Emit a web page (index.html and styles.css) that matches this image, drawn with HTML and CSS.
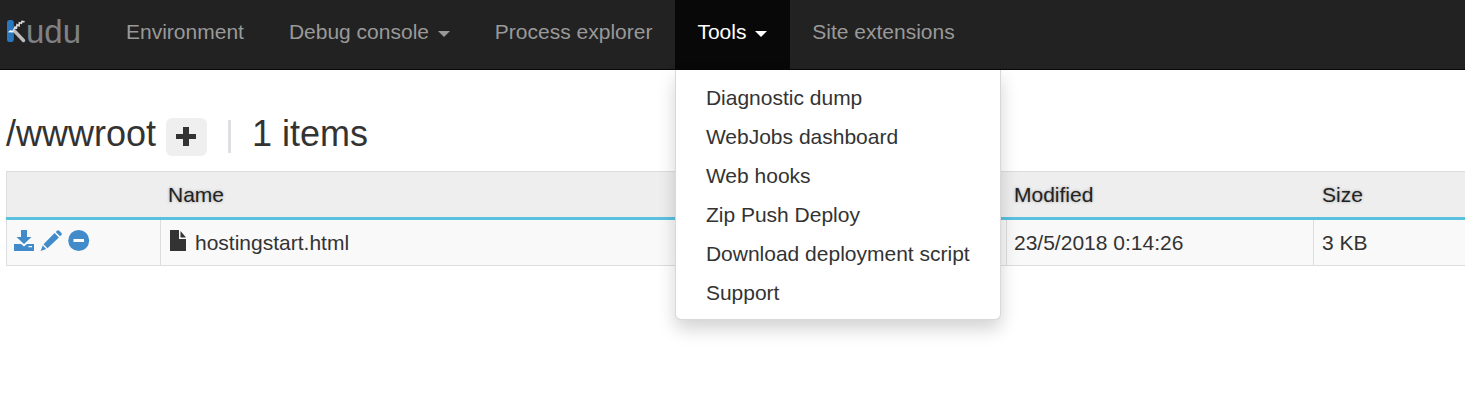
FILE: index.html
```html
<!DOCTYPE html>
<html lang="en">
<head>
<meta charset="utf-8">
<title>Kudu</title>
<link rel="stylesheet" href="styles.css">
</head>
<body>
<nav class="navbar">
  <a class="brand">
    <svg class="brand-mark" width="20" height="24" viewBox="0 0 20 24">
      <rect x="1" y="1" width="6.800" height="22" rx="2.800" fill="#2878c0"/>
      <path d="M8.500 12L17.500 21.500" stroke="#bdbdbd" stroke-width="3.400" stroke-linecap="round"/>
      <path d="M1.800 13.200l2.400-2 3.200.6v1.800z" fill="#fff"/>
      <path d="M7 12.500L9 8l1.500.8L11 5.700l2 1 .4-3 2 .6.6-1.900 2.600.3" fill="none" stroke="#d8d8d8" stroke-width="1.600"/>
    </svg><span class="brand-text">udu</span>
  </a>
  <a class="nav-item">Environment</a>
  <a class="nav-item">Debug console <i class="caret"></i></a>
  <a class="nav-item">Process explorer</a>
  <div class="dropdown">
    <a class="nav-item active">Tools <i class="caret"></i></a>
    <div class="menu">
      <a>Diagnostic dump</a>
      <a>WebJobs dashboard</a>
      <a>Web hooks</a>
      <a>Zip Push Deploy</a>
      <a>Download deployment script</a>
      <a>Support</a>
    </div>
  </div>
  <a class="nav-item">Site extensions</a>
</nav>
<main class="content">
  <h3 class="path">
    <span>/wwwroot</span>
    <button class="add" aria-label="Add"><svg width="20" height="19" viewBox="0 0 20 19"><path d="M7 0h6v7h7v5h-7v7H7v-7H0V7h7z" fill="#333"/></svg></button>
    <span class="divider"></span>
    <span>1 items</span>
  </h3>
  <div class="table">
    <div class="row head"><div></div><div>Name</div><div>Modified</div><div>Size</div></div>
    <div class="row">
      <div class="actions">
        <svg width="20" height="21" viewBox="0 0 20 21" fill="#428bca"><path d="M7 0h6v7h4.500L10 14 2.500 7H7z"/><path fill-rule="evenodd" d="M0 14h7l3 2.500L13 14h7v7H0zM14.500 16v1.300h3.500V16z"/></svg>
        <svg width="22" height="21" viewBox="0 0 22 21" fill="#428bca"><path d="M17 .8Q18-.4 19.200.7L21.200 2.700Q22.400 3.900 21.300 5L20 6.300 15.700 2zM14.600 3.100L18.900 7.400 7.500 18.300 3.500 14.200zM2.700 15.400L6.200 19 .6 21z"/></svg>
        <svg width="22" height="21" viewBox="0 0 22 21"><circle cx="10.700" cy="10.500" r="10.500" fill="#428bca"/><rect x="5.500" y="9" width="10.500" height="3" fill="#fff"/></svg>
      </div>
      <div class="file"><svg width="16" height="21" viewBox="0 0 16 21" fill="#333"><path d="M0 0h9v9h7v12H0z"/><path d="M10.500 1L16 7.500h-5.500z"/></svg><span>hostingstart.html</span></div>
      <div>23/5/2018 0:14:26</div>
      <div>3 KB</div>
    </div>
  </div>
</main>
</body>
</html>
```

FILE: styles.css
```css
* { box-sizing: border-box; }
body {
  margin: 0;
  height: 401px;
  overflow: hidden;
  background: #fff;
  color: #333;
  font: 21px/30px "Liberation Sans", Arial, sans-serif;
}
.navbar {
  display: flex;
  height: 70px;
  padding-left: 6px;
  background: #222;
  border-bottom: 1px solid #080808;
}
.brand {
  display: flex;
  align-items: flex-start;
  width: 97.500px;
  padding-top: 19px;
  color: #808184;
}
.brand-mark { flex: none; }
.brand-text { font-size: 33px; line-height: 25px; }
.nav-item {
  display: block;
  height: 69px;
  padding: 17px 22.500px 0;
  color: #999;
  white-space: nowrap;
}
.nav-item.active { background: #080808; color: #fff; }
.caret {
  position: relative;
  top: 1px;
  display: inline-block;
  margin-left: 3px;
  vertical-align: middle;
  border: 6px solid transparent;
  border-top-color: currentColor;
  border-bottom: 0;
}
.dropdown { position: relative; }
.menu {
  position: absolute;
  z-index: 2;
  top: 70px;
  left: 0;
  width: 326px;
  padding: 8px 0 7px;
  background: #fff;
  border: 1px solid rgba(0, 0, 0, .15);
  border-top: 0;
  border-radius: 0 0 6px 6px;
  box-shadow: 0 9px 18px rgba(0, 0, 0, .175);
}
.menu a { display: block; padding: 0 30px; line-height: 39px; }
.content { padding: 45px 0 0 6px; }
.path {
  display: flex;
  height: 56px;
  margin: 0;
  font-size: 36px;
  font-weight: 400;
  line-height: 38px;
}
.add {
  display: flex;
  align-items: center;
  justify-content: center;
  width: 41px;
  height: 38px;
  margin: 3px 21px 0 10px;
  padding: 0 2px 1px 0;
  border: 0;
  border-radius: 6px;
  background: #efefef;
}
.divider { width: 3px; height: 33px; margin: 5px 21px 0 0; background: #dedfe3; }
.table { border-bottom: 1px solid #ddd; }
.row {
  display: grid;
  grid-template-columns: 153px 846px 307px 1fr;
  height: 45px;
  background: #f9f9f9;
  border-left: 1px solid #ddd;
}
.row > div { padding: 8px 0 0 7px; }
.row:not(.head) > div + div { border-left: 1px solid #ddd; }
.row.head {
  height: 49px;
  background: #eee;
  border: 0;
  border-bottom: 3px solid #5bc0de;
  box-shadow: inset 1px 1px #ddd;
  padding: 1px 0 0 1px;
  color: #222;
  text-shadow: 0 0 3px rgba(0, 0, 0, .35);
}
.row.head > div { padding-left: 8px; }
.row > div:last-child { padding-left: 8px; }
.row.head > div:last-child { padding-left: 9px; }
.row > .actions { display: flex; gap: 6px; padding: 10px 0 0 7px; }
.row > .file { display: flex; gap: 9px; padding-left: 9px; }
.file svg { margin-top: 2px; }
```
